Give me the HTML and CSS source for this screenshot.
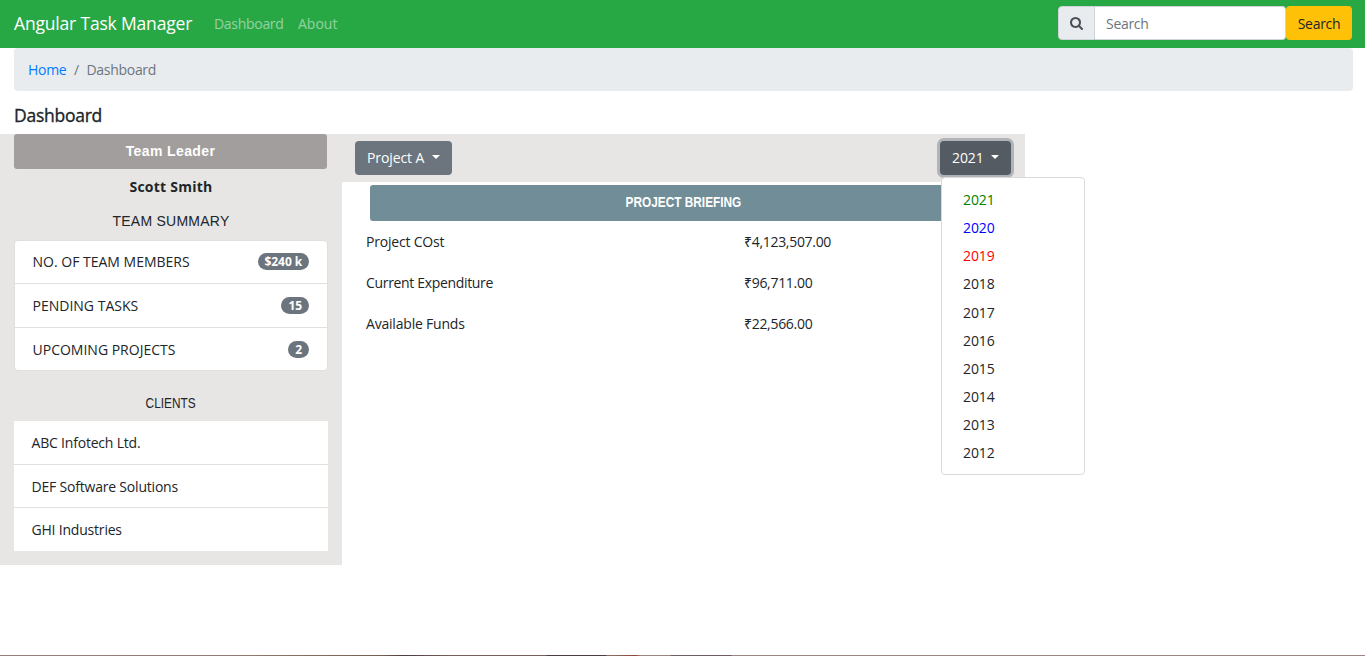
FILE: index.html
```html
<!DOCTYPE html>
<html lang="en">
<head>
<meta charset="utf-8">
<title>Angular Task Manager</title>
<link rel="stylesheet" href="styles.css">
</head>
<body>
<nav class="navbar">
  <a class="brand">Angular Task Manager</a>
  <a class="nav-link nav-dash">Dashboard</a>
  <a class="nav-link nav-about">About</a>
  <form class="search">
    <span class="search-icon"><svg width="13" height="13" viewBox="0 0 1664 1664"><path fill="#495057" d="M1152 704q0-185-131.500-316.500T704 256 387.500 387.500 256 704t131.500 316.500T704 1152t316.500-131.500T1152 704zm512 832q0 52-38 90t-90 38q-54 0-90-38l-343-342q-179 124-399 124-143 0-273.500-55.500t-225-150-150-225T0 704t55.500-273.500 150-225 225-150T704 0t273.500 55.500 225 150 150 225T1408 704q0 220-124 399l343 343q37 37 37 90z"/></svg></span>
    <span class="search-input">Search</span>
    <span class="search-button">Search</span>
  </form>
</nav>
<ol class="breadcrumb">
  <li class="crumb-home">Home</li>
  <li class="crumb-sep">/</li>
  <li class="crumb-current">Dashboard</li>
</ol>
<h5 class="page-title">Dashboard</h5>
<main class="content">
  <aside class="sidebar">
    <div class="team-leader">Team Leader</div>
    <div class="leader-name">Scott Smith</div>
    <div class="team-summary">TEAM SUMMARY</div>
    <ul class="summary-list">
      <li><span>NO. OF TEAM MEMBERS</span><span class="badge">$240 k</span></li>
      <li><span>PENDING TASKS</span><span class="badge">15</span></li>
      <li><span>UPCOMING PROJECTS</span><span class="badge">2</span></li>
    </ul>
    <div class="clients-title"><span class="narrow">CLIENTS</span></div>
    <ul class="client-list">
      <li>ABC Infotech Ltd.</li>
      <li>DEF Software Solutions</li>
      <li>GHI Industries</li>
    </ul>
  </aside>
  <section class="project">
    <div class="toolbar">
      <button class="btn btn-project">Project A<i class="caret"></i></button>
      <div class="dropdown">
        <button class="btn btn-year">2021<i class="caret"></i></button>
        <ul class="menu">
          <li class="green">2021</li>
          <li class="blue">2020</li>
          <li class="red">2019</li>
          <li>2018</li>
          <li>2017</li>
          <li>2016</li>
          <li>2015</li>
          <li>2014</li>
          <li>2013</li>
          <li>2012</li>
        </ul>
      </div>
    </div>
    <div class="briefing"><span class="narrow">PROJECT BRIEFING</span></div>
    <dl class="figures">
      <dt>Project COst</dt><dd>₹4,123,507.00</dd>
      <dt class="expenditure">Current Expenditure</dt><dd>₹96,711.00</dd>
      <dt>Available Funds</dt><dd>₹22,566.00</dd>
    </dl>
  </section>
</main>
<div class="bottom-edge"></div>
</body>
</html>
```
FILE: styles.css
```css
* { box-sizing: border-box; }
html, body { height: 100%; }
body {
  margin: 0;
  display: flex;
  flex-direction: column;
  overflow: hidden;
  background: #fff;
  color: #212529;
  font: 14px/21px "Open Sans", "Noto Sans", sans-serif;
  white-space: nowrap;
}
ul, ol, dl, dd { margin: 0; padding: 0; list-style: none; }

.navbar {
  flex: none;
  display: flex;
  align-items: center;
  height: 48px;
  padding: 0 13px 2px 14px;
  background: #28a745;
}
.brand { width: 200px; padding-top: 1px; color: #fff; font-size: 17.5px; letter-spacing: -.18px; }
.nav-link { color: rgba(255, 255, 255, .5); }
.nav-dash { width: 84px; letter-spacing: -.3px; }
.search { display: flex; height: 34px; margin-left: auto; }
.search-icon {
  width: 37px;
  display: grid;
  place-items: center;
  background: #e9ecef;
  border: 1px solid #ced4da;
  border-radius: 4px 0 0 4px;
}
.search-input {
  width: 191px;
  padding: 6px 11px;
  background: #fff;
  color: #6c757d;
  border: 1px solid #ced4da;
  border-left: 0;
  border-radius: 0 4px 4px 0;
  letter-spacing: -.3px;
}
.search-button {
  width: 66px;
  padding-top: 7px;
  text-align: center;
  background: #ffc107;
  border-radius: 4px;
  letter-spacing: -.3px;
}

.breadcrumb {
  flex: none;
  display: flex;
  height: 43px;
  margin: 0 12px 0 14px;
  padding: 11px 14px;
  background: #e9ecef;
  border-radius: 4px;
  color: #6c757d;
  letter-spacing: -.3px;
}
.crumb-home { width: 46px; color: #007bff; }
.crumb-sep { width: 12.5px; }

.page-title {
  flex: none;
  height: 43px;
  margin: 0;
  padding: 14px 0 0 14px;
  font-size: 17.5px;
  font-weight: 500;
  letter-spacing: -.25px;
  -webkit-text-stroke: .35px #212529;
}

.content { display: flex; align-items: flex-start; }
.sidebar { width: 342px; height: 431px; padding: 0 14px; background: #e7e6e4; }
.team-leader {
  width: 313px;
  height: 35px;
  padding-top: 7px;
  background: #a29e9d;
  color: #fff;
  border-radius: 3px;
  font-family: "Liberation Sans", sans-serif;
  font-weight: 700;
  letter-spacing: .4px;
  text-align: center;
}
.leader-name { height: 35px; padding-top: 7px; font-weight: 700; letter-spacing: .25px; text-align: center; }
.team-summary { height: 36px; padding-top: 7px; font-family: "Liberation Sans", sans-serif; letter-spacing: .25px; text-align: center; }
.summary-list { width: 314px; border: 1px solid #dfdfdf; border-radius: 4px; background: #fff; }
.summary-list li {
  display: flex;
  justify-content: space-between;
  align-items: center;
  height: 44px;
  padding: 0 18px 0 17.5px;
  border-bottom: 1px solid #dfdfdf;
}
.summary-list li:first-child { height: 43px; padding-bottom: 1px; }
.summary-list li:last-child { height: 42px; padding-top: 1px; border-bottom: 0; }
.badge {
  height: 17px;
  padding: 0 7px;
  border-radius: 9px;
  background: #6c757d;
  color: #fff;
  font-size: 12px;
  font-weight: 700;
  line-height: 17px;
  letter-spacing: -.1px;
}
.clients-title { height: 50px; padding-top: 22px; font-family: "Liberation Sans", sans-serif; text-align: center; }
.narrow { display: inline-block; transform: scaleX(.845); }
.client-list { letter-spacing: -.2px; }
.client-list li {
  height: 43px;
  padding: 11px 17px 0 17.5px;
  background: #fff;
  border-bottom: 1px solid #dfdfdf;
}
.client-list li:first-child { height: 44px; }
.client-list li:last-child { border-bottom: 0; }

.project { width: 683px; }
.toolbar {
  display: flex;
  justify-content: space-between;
  height: 48px;
  padding: 7px 14px 0 13px;
  background: #e7e6e4;
}
.btn {
  display: flex;
  align-items: center;
  height: 34px;
  margin: 0;
  padding: 0 12px 1px;
  border: 0;
  border-radius: 4px;
  background: #6c757d;
  color: #fff;
  font: inherit;
  letter-spacing: -.1px;
}
.btn-project { width: 97px; }
.btn-year { width: 71px; background: #545b62; box-shadow: 0 0 0 3px #b0b3b8; }
.caret {
  margin: -1px 0 0 auto;
  border: 4px solid transparent;
  border-top-color: #fff;
  border-bottom: 0;
}
.dropdown { position: relative; }
.menu {
  position: absolute;
  top: 36px;
  left: 1px;
  width: 144px;
  height: 298px;
  padding: 8.2px 0 0 21px;
  border: 1px solid #d9d9d9;
  border-radius: 4px;
  background: #fff;
  letter-spacing: -.1px;
}
.menu li { height: 28.1px; padding-top: 3px; }
.green { color: #008000; }
.blue { color: #00f; }
.red { color: #f00; }
.briefing {
  width: 626px;
  height: 36px;
  margin: 3px 0 0 28px;
  padding-top: 7px;
  background: #708d98;
  color: #fff;
  border-radius: 3px;
  font-family: "Liberation Sans", sans-serif;
  font-weight: 700;
  text-align: center;
}
.figures {
  display: grid;
  grid-template-columns: 378px auto;
  grid-auto-rows: 41px;
  padding: 10px 0 0 24px;
  letter-spacing: -.2px;
}
.figures dd { letter-spacing: -.3px; }
.expenditure { letter-spacing: -.33px; }
.bottom-edge {
  flex: none;
  height: 1px;
  margin-top: auto;
  background: linear-gradient(90deg, #967f76 0, #927c73 230px, #76604f 380px, #4c3c42 405px, #77605b 450px, #77605b 546px, #4b3d46 547px, #4b3d46 606px, #8c7069 607px, #8e4837 636px, #9a8580 640px, #9a8580 670px, #705f62 671px, #6d5b60 731px, #9b8582 732px, #9b8582);
}
```
